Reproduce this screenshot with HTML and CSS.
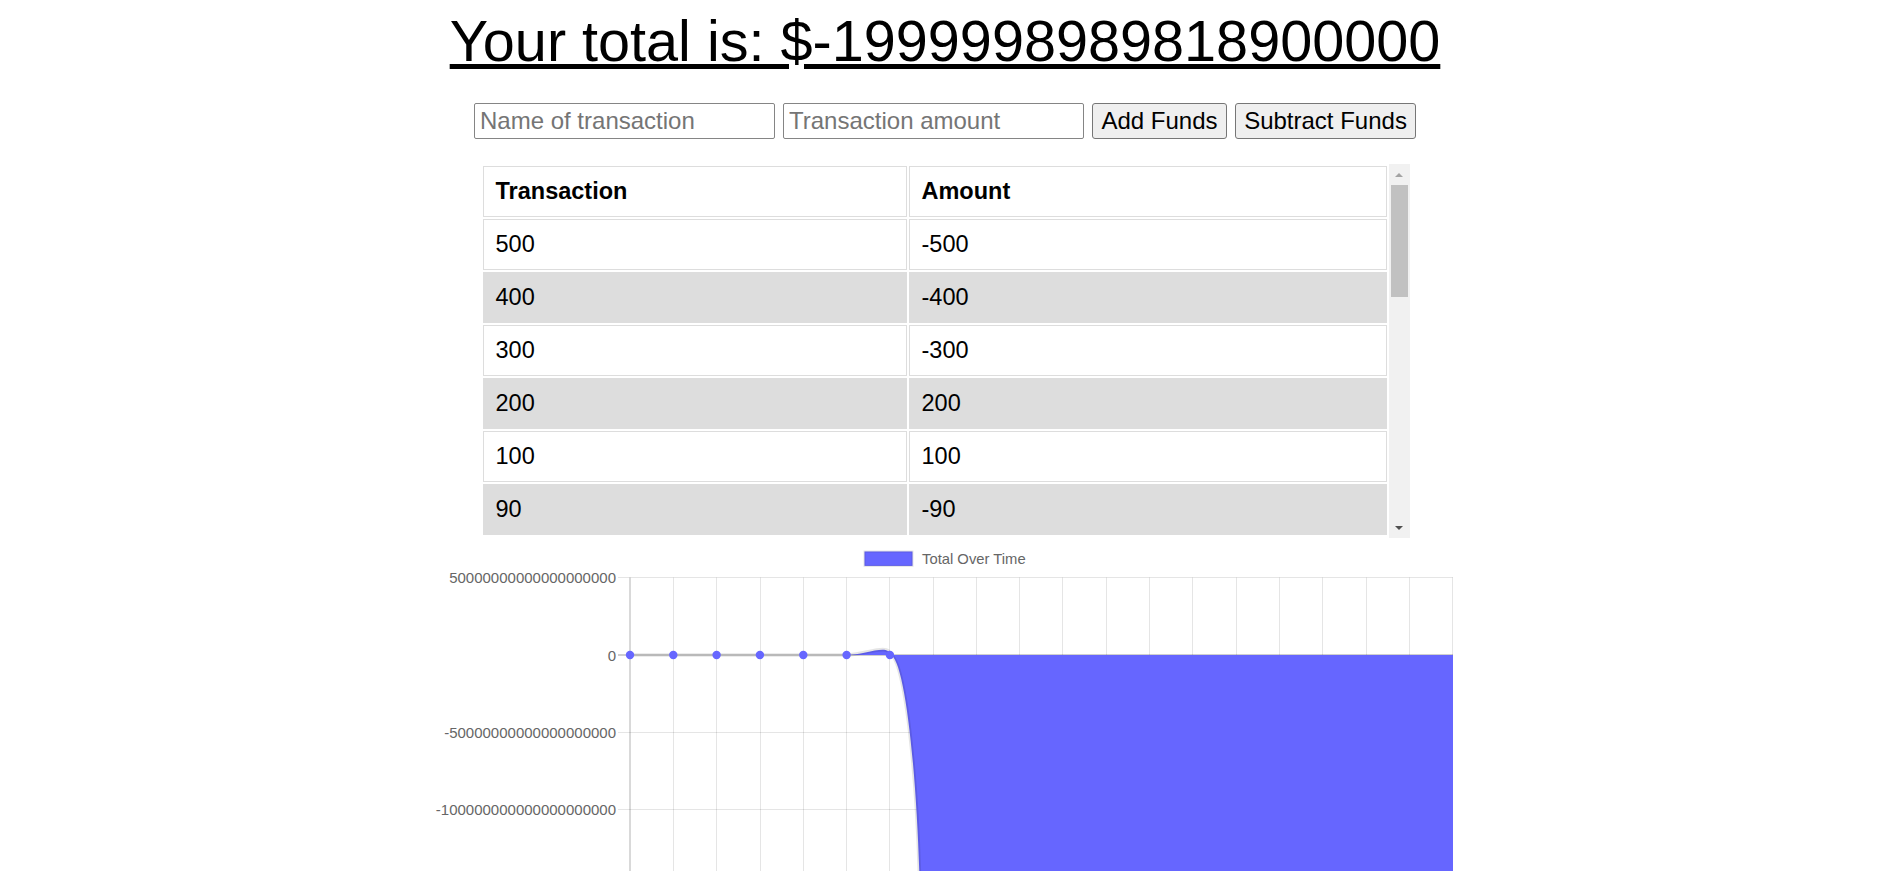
FILE: index.html
```html
<!DOCTYPE html>
<html lang="en">
<head>
<meta charset="utf-8">
<title>Budget Tracker</title>
<link rel="stylesheet" href="styles.css">
</head>
<body>
<div class="page">
  <h1 class="total">Your total is: $-1999998989818900000</h1>

  <form class="controls">
    <input class="field" type="text" placeholder="Name of transaction">
    <input class="field" type="number" placeholder="Transaction amount">
    <button class="btn btn-add" type="button">Add Funds</button>
    <button class="btn btn-sub" type="button">Subtract Funds</button>
  </form>

  <div class="table-box">
    <div class="table-scroll">
      <table class="ledger">
        <thead>
          <tr><th>Transaction</th><th>Amount</th></tr>
        </thead>
        <tbody>
          <tr><td>500</td><td>-500</td></tr>
          <tr><td>400</td><td>-400</td></tr>
          <tr><td>300</td><td>-300</td></tr>
          <tr><td>200</td><td>200</td></tr>
          <tr><td>100</td><td>100</td></tr>
          <tr><td>90</td><td>-90</td></tr>
        </tbody>
      </table>
    </div>
    <div class="scrollbar">
      <div class="sb-btn"><span class="arrow-up"></span></div>
      <div class="sb-thumb"></div>
      <div class="sb-fill"></div>
      <div class="sb-btn"><span class="arrow-down"></span></div>
    </div>
  </div>

  <svg class="chart" width="1030" height="333" viewBox="0 0 1030 333">
    <!-- legend -->
    <rect x="434.5" y="13.5" width="48" height="14.4" fill="#6666ff" stroke="rgba(0,0,0,0.1)" stroke-width="2"/>
    <text class="legend-label" x="492" y="21" dominant-baseline="central">Total Over Time</text>

    <!-- horizontal grid lines + tick marks -->
    <g stroke="rgba(0,0,0,0.1)" stroke-width="1">
      <line x1="188" y1="39.5" x2="1023" y2="39.5"/>
      <line x1="188" y1="194.5" x2="1023" y2="194.5"/>
      <line x1="188" y1="271.5" x2="1023" y2="271.5"/>
    </g>
    <line x1="188" y1="117" x2="1023" y2="117" stroke="rgba(0,0,0,0.25)" stroke-width="1.4"/>

    <!-- vertical grid lines -->
    <g stroke="rgba(0,0,0,0.1)" stroke-width="1">
      <line x1="243.5" y1="39.5" x2="243.5" y2="333"/>
      <line x1="286.5" y1="39.5" x2="286.5" y2="333"/>
      <line x1="330.5" y1="39.5" x2="330.5" y2="333"/>
      <line x1="373.5" y1="39.5" x2="373.5" y2="333"/>
      <line x1="416.5" y1="39.5" x2="416.5" y2="333"/>
      <line x1="459.5" y1="39.5" x2="459.5" y2="333"/>
      <line x1="503.5" y1="39.5" x2="503.5" y2="333"/>
      <line x1="546.5" y1="39.5" x2="546.5" y2="333"/>
      <line x1="589.5" y1="39.5" x2="589.5" y2="333"/>
      <line x1="632.5" y1="39.5" x2="632.5" y2="333"/>
      <line x1="676.5" y1="39.5" x2="676.5" y2="333"/>
      <line x1="719.5" y1="39.5" x2="719.5" y2="333"/>
      <line x1="762.5" y1="39.5" x2="762.5" y2="333"/>
      <line x1="806.5" y1="39.5" x2="806.5" y2="333"/>
      <line x1="849.5" y1="39.5" x2="849.5" y2="333"/>
      <line x1="892.5" y1="39.5" x2="892.5" y2="333"/>
      <line x1="936.5" y1="39.5" x2="936.5" y2="333"/>
      <line x1="979.5" y1="39.5" x2="979.5" y2="333"/>
      <line x1="1022.5" y1="39.5" x2="1022.5" y2="333"/>
    </g>
    <line x1="200" y1="39.5" x2="200" y2="333" stroke="rgba(0,0,0,0.25)" stroke-width="1.2"/>

    <!-- y tick labels -->
    <g class="tick-label">
      <text x="186" y="39.7" text-anchor="end" dominant-baseline="central">50000000000000000000</text>
      <text x="186" y="117" text-anchor="end" dominant-baseline="central">0</text>
      <text x="186" y="194.3" text-anchor="end" dominant-baseline="central">-50000000000000000000</text>
      <text x="186" y="271.6" text-anchor="end" dominant-baseline="central">-100000000000000000000</text>
    </g>

    <!-- dataset area -->
    <path d="M200,117 L416.6,117 C433.9,117 459.9,105 459.9,117 C475,117 488,243 490,363 L1023,363 L1023,117 Z" fill="#6666ff"/>
    <path d="M200,117 L416.6,117 C433.9,117 459.9,105 459.9,117 C475,117 488,243 490,363" fill="none" stroke="rgba(0,0,0,0.1)" stroke-width="3.6"/>

    <!-- points -->
    <g fill="#6666ff">
      <circle cx="200" cy="117" r="4.2"/>
      <circle cx="243.3" cy="117" r="4.2"/>
      <circle cx="286.6" cy="117" r="4.2"/>
      <circle cx="329.9" cy="117" r="4.2"/>
      <circle cx="373.3" cy="117" r="4.2"/>
      <circle cx="416.6" cy="117" r="4.2"/>
      <circle cx="459.9" cy="117" r="4.2"/>
    </g>
  </svg>
</div>
</body>
</html>
```
FILE: styles.css
```css
* {
  box-sizing: border-box;
}

html,
body {
  margin: 0;
  padding: 0;
  overflow: hidden;
  background: #ffffff;
}

body {
  font-family: "Liberation Sans", Arial, sans-serif;
  color: #000000;
}

.page {
  width: 1890px;
  display: flex;
  flex-direction: column;
  align-items: center;
  padding-top: 8px;
}

.total {
  margin: 0;
  font-size: 57.6px;
  font-weight: normal;
  line-height: normal;
  text-decoration: underline;
  white-space: nowrap;
}

.controls {
  display: flex;
  gap: 8px;
  margin: 29px 0 0 0;
  height: 36px;
}

.field {
  width: 301px;
  height: 36px;
  margin: 0;
  padding: 0 5px;
  border: 1px solid #858585;
  border-radius: 2px;
  background: #ffffff;
  font: 24px "Liberation Sans", Arial, sans-serif;
  color: #000000;
}

.field::placeholder {
  color: #757575;
}

.btn {
  height: 36px;
  margin: 0;
  padding: 0 8px;
  border: 1px solid #767676;
  border-radius: 3px;
  background: #efefef;
  font: 24px "Liberation Sans", Arial, sans-serif;
  color: #000000;
}

.btn-add {
  width: 135px;
}

.btn-sub {
  width: 181px;
}

.table-box {
  display: flex;
  width: 929px;
  height: 374px;
  margin-top: 25px;
}

.table-scroll {
  flex: 1;
  overflow: hidden;
}

.ledger {
  width: 100%;
  border-collapse: separate;
  border-spacing: 2px;
  font-size: 23.5px;
}

.ledger th,
.ledger td {
  border: 1px solid #dddddd;
  text-align: left;
  padding: 11px 12px;
  line-height: 27px;
}

.ledger th {
  font-weight: bold;
}

.ledger th:first-child {
  width: 424px;
}

.ledger tbody tr:nth-child(even) td {
  background: #dddddd;
}

.scrollbar {
  width: 21px;
  display: flex;
  flex-direction: column;
  align-items: center;
  background: #f1f1f1;
}

.sb-btn {
  width: 21px;
  height: 21px;
  display: flex;
  align-items: center;
  justify-content: center;
}

.arrow-up {
  width: 0;
  height: 0;
  border-left: 4px solid transparent;
  border-right: 4px solid transparent;
  border-bottom: 4px solid #a3a3a3;
}

.arrow-down {
  width: 0;
  height: 0;
  border-left: 4px solid transparent;
  border-right: 4px solid transparent;
  border-top: 4px solid #505050;
}

.sb-thumb {
  width: 17px;
  height: 112px;
  background: #c1c1c1;
}

.sb-fill {
  flex: 1;
}

.chart {
  display: block;
  flex: none;
}

.legend-label {
  font-family: "Liberation Sans", Arial, sans-serif;
  font-size: 14.8px;
  fill: #666666;
}

.tick-label text {
  font-family: "Liberation Sans", Arial, sans-serif;
  font-size: 15px;
  fill: #666666;
}
```
